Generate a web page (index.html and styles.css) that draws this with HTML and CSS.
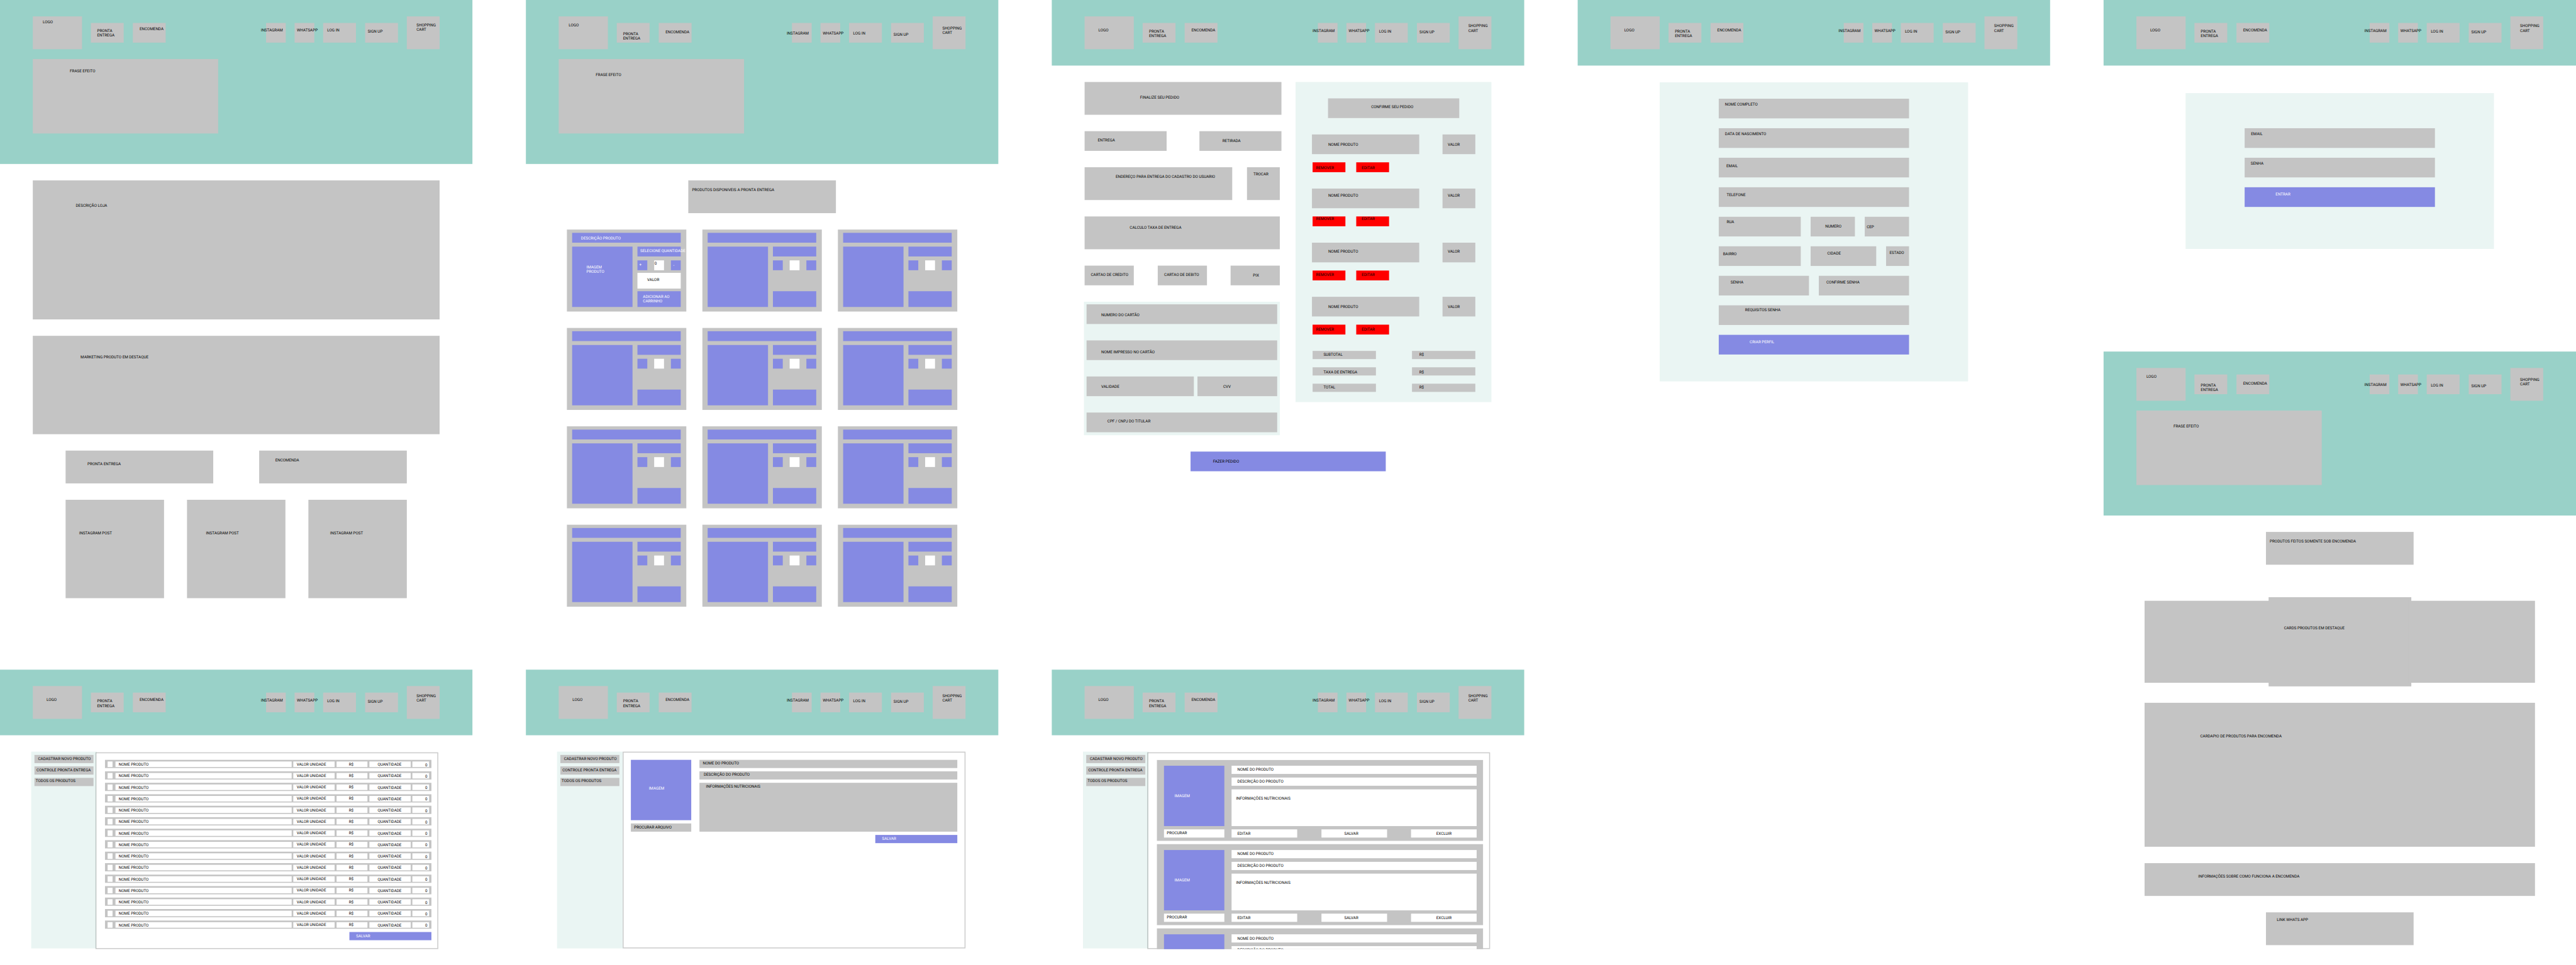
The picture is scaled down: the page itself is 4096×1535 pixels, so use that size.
FILE: index.html
```
<!DOCTYPE html>
<html lang="pt-BR">
<head>
<meta charset="utf-8">
<title>Wireframes</title>
<link rel="stylesheet" href="styles.css">
</head>
<body>

<template id="topbar">
  <nav class="topbar">
    <div class="box logo"><p>LOGO</p></div>
    <div class="box pronta"><p>PRONTA<br>ENTREGA</p></div>
    <div class="box encomenda"><p>ENCOMENDA</p></div>
    <div class="box instagram"><p>INSTAGRAM</p></div>
    <div class="box whatsapp"><p>WHATSAPP</p></div>
    <div class="box login"><p>LOG IN</p></div>
    <div class="box signup"><p>SIGN UP</p></div>
    <div class="box cart"><p>SHOPPING<br>CART</p></div>
  </nav>
</template>

<template id="product">
  <article class="product">
    <div class="fill product-title"></div>
    <div class="fill product-image"></div>
    <div class="product-side">
      <div class="fill product-select"></div>
      <div class="stepper"><div class="fill"></div><div class="blank"></div><div class="fill"></div></div>
      <div class="fill product-add"></div>
    </div>
  </article>
</template>

<template id="stock-row">
  <div class="stock-row">
    <div class="blank"></div>
    <div class="blank st-name"><p>NOME PRODUTO</p></div>
    <div class="blank st-unit"><p>VALOR UNIDADE</p></div>
    <div class="blank st-price"><p>R$</p></div>
    <div class="blank st-qty"><p>QUANTIDADE</p></div>
    <div class="blank st-num"><p>0</p></div>
  </div>
</template>

<template id="side-menu">
  <aside class="side-menu">
    <div class="box sm-new"><p>CADASTRAR NOVO PRODUTO</p></div>
    <div class="box sm-stock"><p>CONTROLE PRONTA ENTREGA</p></div>
    <div class="box sm-all"><p>TODOS OS PRODUTOS</p></div>
  </aside>
</template>

<template id="record">
  <article class="record">
    <div class="record-media">
      <div class="fill rc-image"><p>IMAGEM</p></div>
      <div class="blank rc-browse"><p>PROCURAR</p></div>
    </div>
    <div class="record-data">
      <div class="blank rc-name"><p>NOME DO PRODUTO</p></div>
      <div class="blank rc-desc"><p>DESCRIÇÃO DO PRODUTO</p></div>
      <div class="blank rc-info"><p>INFORMAÇÕES NUTRICIONAIS</p></div>
      <div class="record-actions">
        <div class="blank rc-edit"><p>EDITAR</p></div>
        <div class="blank rc-save"><p>SALVAR</p></div>
        <div class="blank rc-delete"><p>EXCLUIR</p></div>
      </div>
    </div>
  </article>
</template>

<template id="order-item">
  <div class="order-item">
    <div class="order-line">
      <div class="box oi-name"><p>NOME PRODUTO</p></div>
      <div class="box oi-value"><p>VALOR</p></div>
    </div>
    <div class="order-actions">
      <div class="red oi-remove"><p>REMOVER</p></div>
      <div class="red oi-edit"><p>EDITAR</p></div>
    </div>
  </div>
</template>

<main class="board">
  <div class="column">
    <section class="frame frame-tall">
      <header class="hero hero-home">
        <div data-use="topbar"></div>
        <div class="box slogan"><p>FRASE EFEITO</p></div>
      </header>
      <div class="home">
        <div class="box hm-about"><p>DESCRIÇÃO LOJA</p></div>
        <div class="box hm-marketing"><p>MARKETING PRODUTO EM DESTAQUE</p></div>
        <div class="hm-links">
          <div class="box hm-pronta"><p>PRONTA ENTREGA</p></div>
          <div class="box hm-encomenda"><p>ENCOMENDA</p></div>
        </div>
        <div class="hm-posts">
          <div class="box hm-post1"><p>INSTAGRAM POST</p></div>
          <div class="box hm-post2"><p>INSTAGRAM POST</p></div>
          <div class="box hm-post3"><p>INSTAGRAM POST</p></div>
        </div>
      </div>
    </section>
    <section class="frame">
      <header class="bar"><div data-use="topbar"></div></header>
      <div class="admin">
        <div data-use="side-menu"></div>
        <div class="panel panel-low">
          <div class="stock"><div data-use="stock-row" data-count="15"></div></div>
          <div class="fill save"><p>SALVAR</p></div>
        </div>
      </div>
    </section>
  </div>

  <div class="column">
    <section class="frame frame-tall">
      <header class="hero hero-inner">
        <div data-use="topbar"></div>
        <div class="box slogan"><p>FRASE EFEITO</p></div>
      </header>
      <div class="box catalog-title"><p>PRODUTOS DISPONIVEIS A PRONTA ENTREGA</p></div>
      <div class="catalog">
        <article class="product">
          <div class="fill product-title"><p>DESCRIÇÃO PRODUTO</p></div>
          <div class="fill product-image"><p>IMAGEM<br>PRODUTO</p></div>
          <div class="product-side">
            <div class="fill product-select"><p>SELECIONE QUANTIDADE</p></div>
            <div class="stepper">
              <div class="fill plus"><p>+</p></div>
              <div class="blank count"><p>0</p></div>
              <div class="fill minus"><p>-</p></div>
            </div>
            <div class="blank product-value"><p>VALOR</p></div>
            <div class="fill product-add"><p>ADICIONAR AO<br>CARRINHO</p></div>
          </div>
        </article>
        <div data-use="product" data-count="11"></div>
      </div>
    </section>
    <section class="frame">
      <header class="bar"><div data-use="topbar"></div></header>
      <div class="admin">
        <div data-use="side-menu"></div>
        <div class="panel panel-form">
          <div class="entry">
            <div class="entry-media">
              <div class="fill en-image"><p>IMAGEM</p></div>
              <div class="box en-browse"><p>PROCURAR ARQUIVO</p></div>
            </div>
            <div class="entry-data">
              <div class="box en-name"><p>NOME DO PRODUTO</p></div>
              <div class="box en-desc"><p>DESCRIÇÃO DO PRODUTO</p></div>
              <div class="box en-info"><p>INFORMAÇÕES NUTRICIONAIS</p></div>
            </div>
          </div>
          <div class="fill save"><p>SALVAR</p></div>
        </div>
      </div>
    </section>
  </div>

  <div class="column">
    <section class="frame frame-tall">
      <header class="bar"><div data-use="topbar"></div></header>
      <div class="checkout">
        <div class="co-form">
          <div class="box co-title"><p>FINALIZE SEU PEDIDO</p></div>
          <div class="co-row co-mode">
            <div class="box co-delivery"><p>ENTREGA</p></div>
            <div class="box co-pickup"><p>RETIRADA</p></div>
          </div>
          <div class="co-row co-narrow">
            <div class="box co-address"><p>ENDEREÇO PARA ENTREGA DO CADASTRO DO USUARIO</p></div>
            <div class="box co-change"><p>TROCAR</p></div>
          </div>
          <div class="box co-fee co-narrow"><p>CALCULO TAXA DE ENTREGA</p></div>
          <div class="co-row co-narrow">
            <div class="box co-credit"><p>CARTAO DE CREDITO</p></div>
            <div class="box co-debit"><p>CARTAO DE DEBITO</p></div>
            <div class="box co-pix"><p>PIX</p></div>
          </div>
          <div class="card-data">
            <div class="box cd-number"><p>NUMERO DO CARTÃO</p></div>
            <div class="box cd-name"><p>NOME IMPRESSO NO CARTÃO</p></div>
            <div class="cd-row">
              <div class="box cd-expiry"><p>VALIDADE</p></div>
              <div class="box cd-cvv"><p>CVV</p></div>
            </div>
            <div class="box cd-holder"><p>CPF / CNPJ DO TITULAR</p></div>
          </div>
        </div>
        <div class="order">
          <div class="box order-title"><p>CONFIRME SEU PEDIDO</p></div>
          <div class="order-items"><div data-use="order-item" data-count="4"></div></div>
          <div class="totals">
            <div class="box tt-sub"><p>SUBTOTAL</p></div><div class="box tt-sub tt-amount"><p>R$</p></div>
            <div class="box tt-fee"><p>TAXA DE ENTREGA</p></div><div class="box tt-fee tt-amount"><p>R$</p></div>
            <div class="box tt-all"><p>TOTAL</p></div><div class="box tt-all tt-amount"><p>R$</p></div>
          </div>
        </div>
      </div>
      <div class="fill co-submit"><p>FAZER PEDIDO</p></div>
    </section>
    <section class="frame">
      <header class="bar"><div data-use="topbar"></div></header>
      <div class="admin">
        <div data-use="side-menu"></div>
        <div class="panel panel-low panel-list">
          <div class="records">
            <div data-use="record" data-count="2"></div>
            <article class="record">
              <div class="record-media"><div class="fill rc-image"></div></div>
              <div class="record-data">
                <div class="blank rc-name"><p>NOME DO PRODUTO</p></div>
                <div class="blank rc-desc"><p>DESCRIÇÃO DO PRODUTO</p></div>
              </div>
            </article>
          </div>
        </div>
      </div>
    </section>
  </div>

  <div class="column">
    <section class="frame">
      <header class="bar"><div data-use="topbar"></div></header>
      <div class="sheet signup-sheet">
        <div class="box f-name"><p>NOME COMPLETO</p></div>
        <div class="box f-birth"><p>DATA DE NASCIMENTO</p></div>
        <div class="box f-email"><p>EMAIL</p></div>
        <div class="box f-phone"><p>TELEFONE</p></div>
        <div class="f-row">
          <div class="box f-street"><p>RUA</p></div>
          <div class="box f-number"><p>NUMERO</p></div>
          <div class="box f-zip"><p>CEP</p></div>
        </div>
        <div class="f-row">
          <div class="box f-district"><p>BAIRRO</p></div>
          <div class="box f-city"><p>CIDADE</p></div>
          <div class="box f-state"><p>ESTADO</p></div>
        </div>
        <div class="f-row">
          <div class="box f-pass"><p>SENHA</p></div>
          <div class="box f-confirm"><p>CONFIRME SENHA</p></div>
        </div>
        <div class="box f-rules"><p>REQUISITOS SENHA</p></div>
        <div class="fill f-submit"><p>CRIAR PERFIL</p></div>
      </div>
    </section>
  </div>

  <div class="column">
    <section class="frame frame-login">
      <header class="bar"><div data-use="topbar"></div></header>
      <div class="sheet login-sheet">
        <div class="box l-email"><p>EMAIL</p></div>
        <div class="box l-pass"><p>SENHA</p></div>
        <div class="fill f-submit"><p>ENTRAR</p></div>
      </div>
    </section>
    <section class="frame frame-preorder">
      <header class="hero hero-inner">
        <div data-use="topbar"></div>
        <div class="box slogan"><p>FRASE EFEITO</p></div>
      </header>
      <div class="box catalog-title"><p>PRODUTOS FEITOS SOMENTE SOB ENCOMENDA</p></div>
      <div class="preorder">
        <div class="carousel">
          <div class="box"></div>
          <div class="box po-cards"><p>CARDS PRODUTOS EM DESTAQUE</p></div>
          <div class="box"></div>
        </div>
        <div class="box po-menu"><p>CARDAPIO DE PRODUTOS PARA ENCOMENDA</p></div>
        <div class="box po-info"><p>INFORMAÇÕES SOBRE COMO FUNCIONA A ENCOMENDA</p></div>
        <div class="box po-link"><p>LINK WHATS APP</p></div>
      </div>
    </section>
  </div>
</main>
<script src="script.js"></script>
</body>
</html>
```
FILE: script.js
```
// Replaces each placeholder with copies of the template it names.
document.querySelectorAll('main [data-use]').forEach(function (slot) {
  var template = document.getElementById(slot.dataset.use);
  var count = Number(slot.dataset.count || 1);
  for (var i = 0; i < count; i++) {
    slot.before(template.content.cloneNode(true));
  }
  slot.remove();
});
```
FILE: styles.css
```
* { box-sizing: border-box; }

html { overflow: hidden; }

body {
  margin: 0;
  width: 4096px;
  height: 1535px;
  background: #fff;
  overflow: hidden;
}

.board {
  transform: scale(0.52165);
  transform-origin: 0 0;
  display: flex;
  gap: 163px;
  width: 7852px;
  height: 2942px;
  font: 12px/14px Roboto, "Liberation Sans", sans-serif;
  color: #000;
  text-rendering: geometricPrecision;
}

.column { width: 1440px; flex: none; }
.frame { background: #fff; height: 900px; }
.frame-tall { height: 2042px; }
.frame-login { height: 1072px; }
.frame-preorder { height: 1870px; }

/* Blocks: --x and --y place the label inside its block. */
.box, .fill, .blank, .red { display: flow-root; }
.box { background: #c4c4c4; }
.fill { background: #858ae3; color: #fff; }
.blank { background: #fff; }
.red { background: #f00; }
p { margin: var(--y, 0) 0 0 var(--x, 0); white-space: nowrap; }

/* Header */
.bar { height: 200px; background: #99d1c8; padding: 50px 100px 0; }
.hero { height: 500px; background: #99d1c8; padding: 50px 100px 0; }
.topbar { --d: 3px; display: flex; align-items: center; gap: 27.27px; }
.topbar > * { width: 100px; height: 60px; }
.topbar .logo { width: 150px; height: 100px; --x: 42px; --y: 34px; }
.topbar .pronta { --x: 19px; --y: calc(16px + var(--d)); }
.topbar .encomenda { --x: 21px; --y: calc(11px + var(--d)); }
.topbar .instagram { width: 60px; margin-left: auto; --x: -16px; --y: calc(14px + var(--d)); }
.topbar .whatsapp { width: 60px; --x: 6.5px; --y: calc(14px + var(--d)); }
.topbar .login { --x: 12px; --y: calc(15px + var(--d)); }
.topbar .signup { --x: 8px; --y: calc(18px + var(--d)); }
.topbar .cart { height: 100px; --x: 29.5px; --y: calc(19px + var(--d)); }
.hero-home .topbar { --d: 0px; }
.hero-home .logo { --x: 30.5px; --y: 10px; }
.hero-inner .topbar { --d: 10px; }
.hero-inner .logo { --x: 30.5px; --y: 20px; }
.slogan { width: 565px; height: 227px; margin-top: 30px; --x: 113px; --y: 30px; }
.hero-inner .slogan { --y: 40px; }

/* Home */
.home { display: flex; flex-direction: column; gap: 50px; padding: 50px 100px 0; }
.hm-about { height: 424px; --x: 131px; --y: 69px; }
.hm-marketing { height: 300px; --x: 145.6px; --y: 58px; }
.hm-links, .hm-posts { display: flex; justify-content: space-between; padding: 0 100px; }
.hm-links > * { width: 450px; height: 100px; }
.hm-pronta { --x: 66.7px; --y: 34px; }
.hm-encomenda { --x: 49px; --y: 23px; }
.hm-posts > * { width: 300px; height: 300px; --y: 95px; }
.hm-post1 { --x: 41px; }
.hm-post2 { --x: 57.6px; }
.hm-post3 { --x: 66px; }

/* Catalog */
.catalog-title { width: 450px; height: 100px; margin: 50px auto; --x: 11.5px; --y: 22px; }
.catalog { display: grid; grid-template-columns: repeat(3, 364px); gap: 50px 49px; justify-content: center; }
.product {
  display: grid;
  grid-template: 30px 184px / 184px 132px;
  gap: 12px 15px;
  height: 250px;
  padding: 10px 16px 14px;
  background: #c4c4c4;
}
.product-title { grid-column: span 2; --x: 27px; --y: 8.6px; }
.product-image { --x: 43.5px; --y: 54.7px; }
.product-side { display: flex; flex-direction: column; }
.product-select { height: 30px; --x: 8.4px; --y: 6px; }
.stepper { display: flex; justify-content: space-between; margin: 12px 0 8px; }
.stepper > * { width: 30px; height: 30px; }
.plus { --x: 5.5px; --y: 5.5px; }
.count { --x: 1px; --y: 3px; }
.minus { --x: 7px; --y: 7px; }
.product-value { height: 48px; --x: 29.8px; --y: 13.7px; }
.product-add { height: 48px; margin-top: auto; --x: 16.8px; --y: 9.7px; }

/* Checkout */
.checkout { display: flex; align-items: flex-start; justify-content: space-between; padding: 50px 100px 0; }
.co-form { width: 600px; display: flex; flex-direction: column; gap: 50px; }
.co-row { display: flex; justify-content: space-between; }
.co-narrow { width: 595px; }
.co-title { height: 100px; --x: 169px; --y: 40px; }
.co-mode > * { width: 250px; height: 60px; }
.co-delivery { --x: 40px; --y: 21px; }
.co-pickup { --x: 70px; --y: 22.6px; }
.co-address { width: 450px; height: 100px; --x: 94.6px; --y: 22px; }
.co-change { width: 100px; height: 100px; --x: 19.5px; --y: 13px; }
.co-fee { height: 100px; --x: 137.5px; --y: 26px; }
.co-credit, .co-debit, .co-pix { width: 150px; height: 60px; }
.co-credit { --x: 19px; --y: 20px; }
.co-debit { --x: 20px; --y: 20px; }
.co-pix { --x: 68px; --y: 23px; }
.card-data {
  display: flex;
  flex-direction: column;
  gap: 50px;
  width: 597px;
  height: 407px;
  margin-left: -2px;
  padding: 8px 8px 0;
  background: #eaf5f3;
}
.card-data .box { height: 60px; --x: 44.7px; }
.card-data .cd-number { --y: 26px; }
.card-data .cd-name { --y: 28px; }
.cd-row { display: flex; justify-content: space-between; }
.card-data .cd-expiry { width: 327px; --y: 24px; }
.card-data .cd-cvv { width: 243.5px; --x: 79px; --y: 24px; }
.card-data .cd-holder { --x: 63.5px; --y: 19px; }
.order { width: 597px; height: 976px; padding: 50px 49.5px 0; background: #eaf5f3; }
.order-title { width: 400px; height: 60px; margin: 0 auto 50px; --x: 132px; --y: 18.7px; }
.order-item { --y: 24px; height: 165px; }
.order-item:nth-child(2) { --y: 14px; }
.order-item:nth-child(3) { --y: 20px; }
.order-item:nth-child(4) { --y: 23px; }
.order-line { display: flex; justify-content: space-between; }
.oi-name { width: 327px; height: 60px; --x: 50px; }
.oi-value { width: 100px; height: 60px; --x: 16.4px; }
.order-actions { display: flex; gap: 33px; margin: 25px 0 0 2px; }
.order-actions > * { width: 100px; height: 30px; }
.order-actions p { margin-top: calc(var(--y) - 15px); }
.oi-remove { --x: 11px; }
.oi-edit { --x: 17px; }
.totals { display: grid; grid-template-columns: 193px 193px; justify-content: space-between; gap: 25px; padding-left: 2px; }
.totals > * { height: 25px; --x: 33.6px; --y: 4px; }
.totals .tt-fee { --y: 7px; }
.totals .tt-amount { --x: 22.5px; }
.co-submit { width: 595px; height: 60px; margin: 50px auto 0; color: #000; --x: 69px; --y: 21.7px; }

/* Sign up and log in */
.sheet { display: flex; flex-direction: column; gap: 30px; width: 940px; margin: 0 auto; padding: 0 180px; background: #eaf5f3; }
.sheet .box, .sheet .fill { height: 60px; }
.signup-sheet { height: 912px; margin-top: 51px; padding-top: 50px; }
.login-sheet { height: 475px; margin-top: 84px; padding-top: 107px; }
.f-row { display: flex; justify-content: space-between; }
.f-name { --x: 18.7px; --y: 10px; }
.f-birth { --x: 19px; --y: 10px; }
.f-email { --x: 23px; --y: 17px; }
.f-phone { --x: 24px; --y: 17px; }
.f-street { width: 250px; --x: 24px; --y: 9.3px; }
.f-number { width: 135px; --x: 44.6px; --y: 22px; }
.f-zip { width: 135px; --x: 6px; --y: 23px; }
.f-district { width: 250px; --x: 13px; --y: 17px; }
.f-city { width: 200px; --x: 50.8px; --y: 15px; }
.f-state { width: 70px; --x: 10.4px; --y: 12px; }
.f-pass { width: 275px; --x: 36px; --y: 12px; }
.f-confirm { width: 275px; --x: 23px; --y: 12px; }
.f-rules { --x: 80.3px; --y: 6px; }
.f-submit { --x: 94.3px; --y: 14.4px; }
.l-email { --x: 19.5px; --y: 10px; }
.l-pass { --x: 18.5px; --y: 10px; }

/* Pre-order: the wide cards run under the taller middle one. */
.preorder { display: flex; flex-direction: column; padding: 60px 125px 0; }
.carousel { display: flex; align-items: center; height: 250px; }
.carousel > * { flex: 1; height: 250px; }
.carousel .po-cards { flex: 0 0 435px; height: 272px; margin: 0 -8px; --x: 47.4px; --y: 87px; }
.po-menu { height: 439px; margin-top: 61px; --x: 169.6px; --y: 95px; }
.po-info { height: 100px; margin-top: 50px; --x: 163.4px; --y: 34px; }
.po-link { width: 450px; height: 100px; margin: 50px auto 0; --x: 33px; --y: 16px; }

/* Admin */
.admin { display: flex; align-items: flex-start; padding: 50px 0 0 95px; }
.side-menu { display: flex; flex-direction: column; gap: 10px; width: 200px; height: 600px; padding: 10px; background: #eaf5f3; }
.side-menu > * { height: 25px; }
.sm-new { --x: 11px; --y: 3.7px; }
.sm-stock { --x: 6.3px; --y: 4px; }
.sm-all { --x: 4px; --y: 2px; }
.panel {
  width: 1045px;
  height: 600px;
  border: 3px solid rgba(0, 0, 0, 0.2);
  background: #fff padding-box;
}
.panel-form { padding: 22px 22px 0; }
.panel-low { margin: 2px 0 0 -4px; padding: 20px 18px 0 26px; }
.save { width: 250px; height: 25px; margin: 10px 0 0 auto; --x: 20.6px; --y: 5px; }

.stock { display: flex; flex-direction: column; gap: 10px; }
.stock-row {
  display: grid;
  grid-template-columns: 15px 541px 126px 94.5px 126px 51.5px;
  column-gap: 5px;
  height: 25px;
  padding: 5px 6.5px 5px 7.5px;
  justify-content: space-between;
  background: #c4c4c4;
}
.stock-row .st-name { margin-left: 4px; --x: 10px; --y: 1.7px; }
.st-unit { --x: 10px; --y: 0.8px; }
.st-price { --x: 37.6px; --y: 0.8px; }
.st-qty { --x: 25.4px; --y: 1.7px; }
.st-num { --x: 39px; --y: 3px; }

.entry { display: flex; gap: 25px; }
.entry-media, .entry-data { display: flex; flex-direction: column; gap: 10px; }
.entry-media { width: 184px; }
.entry-data { flex: 1; }
.en-image { height: 184px; --x: 54.7px; --y: 79px; }
.en-browse { height: 25px; --x: 9.8px; --y: 4.7px; }
.en-name { height: 25px; --x: 10.4px; --y: 4px; }
.en-desc { height: 25px; --x: 13px; --y: 3px; }
.en-info { height: 149px; --x: 20px; --y: 4px; }

.records { display: flex; flex-direction: column; gap: 10px; height: 577px; overflow: hidden; position: relative; }
.record { display: flex; flex: none; gap: 22px; height: 247px; padding: 18px 20px 10px 22px; background: #c4c4c4; }
.record-media { width: 184px; display: flex; flex-direction: column; gap: 10px; }
.rc-image { height: 184px; --x: 32px; --y: 85px; }
.rc-browse { height: 25px; --x: 8.7px; --y: 3px; }
.record-data { flex: 1; display: flex; flex-direction: column; gap: 11px; }
.rc-name { height: 25px; --x: 17.8px; --y: 5px; }
.rc-desc { height: 25px; --x: 17.8px; --y: 4.4px; }
.rc-info { height: 112px; --x: 13.7px; --y: 20px; }
.record-actions { display: flex; justify-content: space-between; margin-top: -1px; }
.record-actions > * { width: 200px; height: 25px; --y: 5px; }
.rc-edit { --x: 17.8px; }
.rc-save { --x: 70px; }
.rc-delete { --x: 77px; }
```
